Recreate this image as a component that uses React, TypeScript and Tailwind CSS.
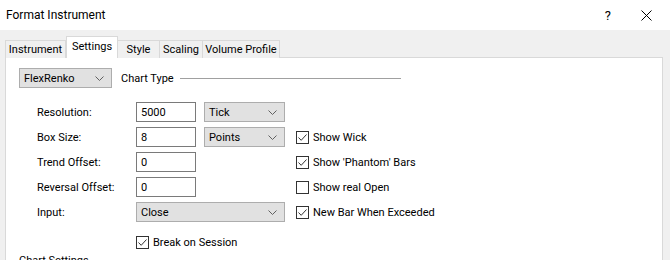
import React from "react";

const Chevron = () => (
  <svg width="9" height="5" viewBox="0 0 9 5" className="shrink-0">
    <path d="M0.5 0.5 L4.5 4.5 L8.5 0.5" fill="none" stroke="#606060" strokeWidth="1" />
  </svg>
);

const Dropdown = ({ value, className }: { value: string; className: string }) => (
  <div
    className={`flex h-[20px] items-center justify-between border border-[#adadad] bg-[#e1e1e1] pl-[4px] pr-[7px] ${className}`}
  >
    <span>{value}</span>
    <Chevron />
  </div>
);

const TextBox = ({ value }: { value: string }) => (
  <div className="flex h-[20px] w-[60px] items-center border border-[#7a7a7a] bg-white pl-[4px]">
    {value}
  </div>
);

const CheckBox = ({ label, checked }: { label: string; checked: boolean }) => (
  <div className="flex items-center gap-[4px] whitespace-nowrap">
    <div className="flex h-[13px] w-[13px] items-center justify-center border border-[#333333] bg-white">
      {checked && (
        <svg width="11" height="11" viewBox="0 0 11 11">
          <path d="M1.5 5.5 L4.2 8.3 L9.5 2.5" fill="none" stroke="#333333" strokeWidth="1" />
        </svg>
      )}
    </div>
    <span>{label}</span>
  </div>
);

const tabs = [
  { name: "Instrument", w: "w-[61px]" },
  { name: "Settings", w: "w-[52px]", active: true },
  { name: "Style", w: "w-[43px]" },
  { name: "Scaling", w: "w-[44px]" },
  { name: "Volume Profile", w: "w-[78px]" },
];

export default function App() {
  return (
    <div
      className="h-[260px] w-[670px] overflow-hidden bg-[#f0f0f0] text-[11px] leading-none text-black"
      style={{ fontFamily: 'Roboto, "Liberation Sans", sans-serif' }}
    >
      {/* Title bar */}
      <div className="flex h-[30px] items-center justify-between bg-white pl-[6px] pr-[18px]">
        <span className="text-[12px]">Format Instrument</span>
        <div className="flex items-center gap-[30px]">
          <span className="text-[13px]">?</span>
          <svg width="11" height="11" viewBox="0 0 11 11">
            <path d="M0.5 0.5 L10.5 10.5 M10.5 0.5 L0.5 10.5" stroke="#000" strokeWidth="1" />
          </svg>
        </div>
      </div>

      {/* Tabs */}
      <div className="relative z-10 mt-[6px] flex h-[22px] items-end whitespace-nowrap pl-[5px]">
        {tabs.map((t) =>
          t.active ? (
            <div
              key={t.name}
              className={`flex h-[22px] items-start justify-center border border-b-0 border-[#d9d9d9] bg-white pt-[4px] ${t.w}`}
            >
              {t.name}
            </div>
          ) : (
            <div
              key={t.name}
              className={`-ml-px flex h-[18px] items-center justify-center border border-b-0 border-[#d9d9d9] bg-[#f0f0f0] first:ml-0 ${t.w}`}
            >
              {t.name}
            </div>
          )
        )}
      </div>

      {/* Panel */}
      <div className="-mt-px ml-[5px] h-[220px] w-[658px] border border-[#d9d9d9] bg-white pl-[13px] pt-[10px]">
        <div className="flex items-center">
          <Dropdown value="FlexRenko" className="w-[93px]" />
          <span className="ml-[9px]">Chart Type</span>
          <div className="ml-[6px] h-px w-[221px] bg-[#a0a0a0]" />
        </div>

        <div className="mt-[14px] grid grid-cols-[99px_68px_92px_auto] grid-rows-[repeat(5,20px)] items-center gap-y-[5px] pl-[18px]">
          <span>Resolution:</span>
          <TextBox value="5000" />
          <Dropdown value="Tick" className="w-[81px]" />
          <span />

          <span>Box Size:</span>
          <TextBox value="8" />
          <Dropdown value="Points" className="w-[81px]" />
          <CheckBox label="Show Wick" checked />

          <span>Trend Offset:</span>
          <TextBox value="0" />
          <span />
          <CheckBox label="Show 'Phantom' Bars" checked />

          <span>Reversal Offset:</span>
          <TextBox value="0" />
          <span />
          <CheckBox label="Show real Open" checked={false} />

          <span>Input:</span>
          <div className="col-span-2">
            <Dropdown value="Close" className="w-[149px]" />
          </div>
          <CheckBox label="New Bar When Exceeded" checked />
        </div>

        <div className="mt-[14px] pl-[117px]">
          <CheckBox label="Break on Session" checked />
        </div>

        <div className="mt-[6px]">Chart Settings</div>
      </div>
    </div>
  );
}
